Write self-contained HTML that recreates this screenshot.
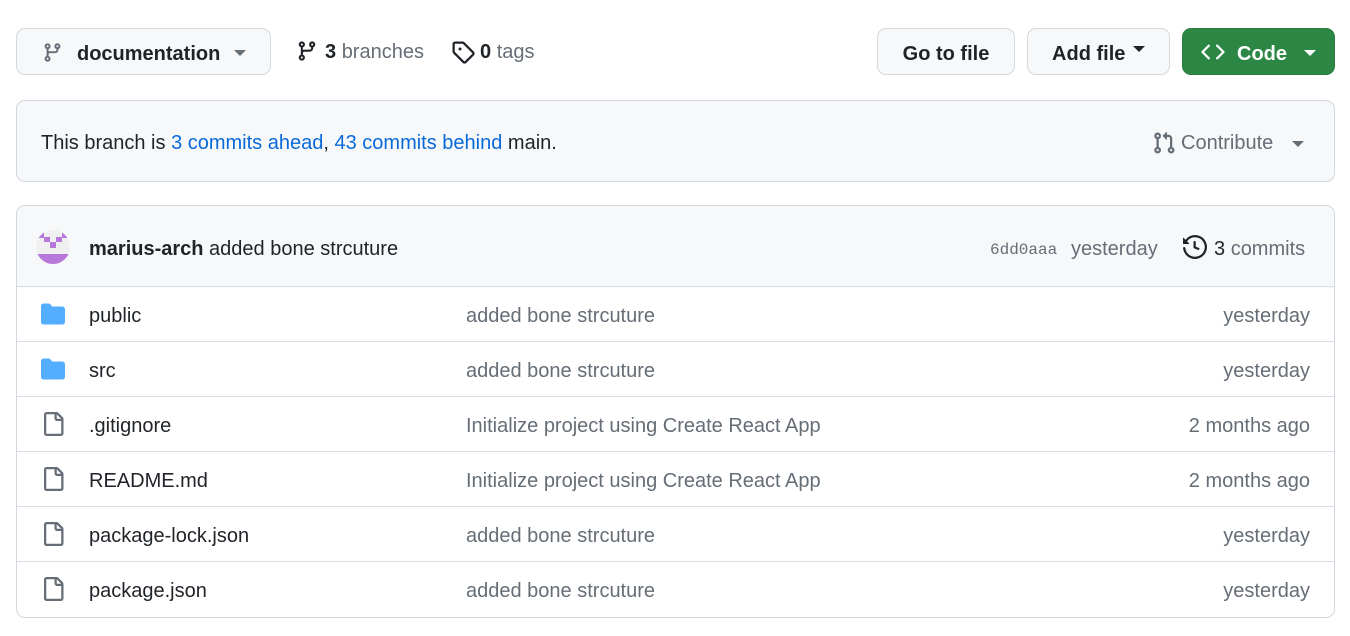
<!DOCTYPE html>
<html><head><meta charset="utf-8"><style>
*{box-sizing:border-box;margin:0;padding:0}
body{width:1350px;height:636px;background:#fff;font-family:"Liberation Sans",sans-serif;color:#1f2328;font-size:20px;position:relative;overflow:hidden}
.abs{position:absolute}
.btn{position:absolute;border:1px solid #d5d8dc;background:#f6f8fa;border-radius:9px;display:flex;align-items:center;font-weight:bold;font-size:20px}
.caret{display:inline-block;width:0;height:0;border-left:6px solid transparent;border-right:6px solid transparent;border-top:6px solid currentColor}
.muted{color:#656d76}
a{color:#0969da;text-decoration:none}
.row{position:absolute;left:17px;width:1317px;height:55px;border-top:1px solid #d8dee4}
.row .ic{position:absolute;left:24px;top:15px}
.row .nm{position:absolute;left:72px;top:18px}
.row .msg{position:absolute;left:449px;top:18px;color:#656d76}
.row .dt{position:absolute;right:24px;top:18px;color:#656d76}
</style></head><body>
<div class="btn" style="left:16px;top:28px;width:255px;height:47px">
<svg class="abs" style="left:25px;top:13px" width="21" height="21" viewBox="0 0 16 16" fill="#656d76"><path d="M9.5 3.25a2.25 2.25 0 1 1 3 2.122V6A2.5 2.5 0 0 1 10 8.5H6a1 1 0 0 0-1 1v1.128a2.251 2.251 0 1 1-1.5 0V5.372a2.25 2.25 0 1 1 1.5 0v1.836A2.493 2.493 0 0 1 6 7h4a1 1 0 0 0 1-1v-.628A2.25 2.250 0 0 1 9.5 3.25Zm-6 0a.75.75 0 1 0 1.5 0 .75.75 0 0 0-1.5 0Zm8.25-.75a.75.75 0 1 0 0 1.5.75.75 0 0 0 0-1.5ZM4.25 12a.75.75 0 1 0 0 1.5.75.75 0 0 0 0-1.5Z"/></svg>
<span class="abs" style="left:60px;top:14px">documentation</span>
<span class="caret abs" style="left:217px;top:21px;color:#656d76"></span>
</div>
<svg class="abs" style="left:296px;top:40px" width="22" height="22" viewBox="0 0 16 16" fill="#1f2328"><path d="M9.5 3.25a2.25 2.25 0 1 1 3 2.122V6A2.5 2.5 0 0 1 10 8.5H6a1 1 0 0 0-1 1v1.128a2.251 2.251 0 1 1-1.5 0V5.372a2.25 2.25 0 1 1 1.5 0v1.836A2.493 2.493 0 0 1 6 7h4a1 1 0 0 0 1-1v-.628A2.25 2.25 0 0 1 9.5 3.25Zm-6 0a.75.75 0 1 0 1.5 0 .75.75 0 0 0-1.5 0Zm8.25-.75a.75.75 0 1 0 0 1.5.75.75 0 0 0 0-1.5ZM4.25 12a.75.75 0 1 0 0 1.5.75.75 0 0 0 0-1.5Z"/></svg>
<div class="abs" style="left:325px;top:41px"><b>3</b> <span class="muted">branches</span></div>
<svg class="abs" style="left:451px;top:40px" width="24" height="24" viewBox="0 0 16 16" fill="#1f2328"><path d="M1 7.775V2.75C1 1.784 1.784 1 2.75 1h5.025c.464 0 .91.184 1.238.513l6.25 6.250a1.75 1.75 0 0 1 0 2.474l-5.026 5.026a1.75 1.75 0 0 1-2.474 0l-6.25-6.25A1.752 1.752 0 0 1 1 7.775Zm1.5 0c0 .066.026.13.073.177l6.25 6.25a.25.25 0 0 0 .354 0l5.025-5.025a.25.25 0 0 0 0-.354l-6.25-6.25a.25.25 0 0 0-.177-.073H2.75a.25.25 0 0 0-.25.25ZM6 5a1 1 0 1 1 0 2 1 1 0 0 1 0-2Z"/></svg>
<div class="abs" style="left:480px;top:41px"><b>0</b> <span class="muted">tags</span></div>

<div class="btn" style="left:877px;top:28px;width:138px;height:47px;justify-content:center;padding-top:5px">Go to file</div>
<div class="btn" style="left:1027px;top:28px;width:143px;height:47px;justify-content:center;padding-top:5px">Add file&nbsp;<span class="caret" style="margin-left:2px;margin-top:-10px"></span></div>
<div class="btn" style="left:1182px;top:28px;width:153px;height:47px;background:#2c8745;border-color:#2a7f40;color:#fff">
<svg class="abs" style="left:18px;top:11px" width="24" height="24" viewBox="0 0 16 16" fill="#fff"><path d="m11.28 3.22 4.25 4.25a.75.75 0 0 1 0 1.06l-4.25 4.25a.749.749 0 0 1-1.275-.326.749.749 0 0 1 .215-.734L13.94 8l-3.72-3.72a.749.749 0 0 1 .326-1.275.749.749 0 0 1 .734.215Zm-6.56 0a.751.751 0 0 1 1.042.018.751.751 0 0 1 .018 1.042L2.06 8l3.72 3.72a.749.749 0 0 1-.326 1.275.749.749 0 0 1-.734-.215L.47 8.53a.75.75 0 0 1 0-1.06Z"/></svg>
<span class="abs" style="left:54px;top:14px">Code</span>
<span class="caret abs" style="left:121px;top:21px"></span>
</div>

<div class="abs" style="left:16px;top:100px;width:1319px;height:82px;background:#f6f8fa;border:1px solid #d0d7de;border-radius:9px">
<div class="abs" style="left:24px;top:31px">This branch is <a>3 commits ahead</a>, <a>43 commits behind</a> main.</div>
<svg class="abs" style="left:1135px;top:30px" width="24" height="24" viewBox="0 0 16 16" fill="#656d76"><path d="M1.5 3.25a2.25 2.25 0 1 1 3 2.122v5.256a2.251 2.251 0 1 1-1.5 0V5.372A2.25 2.25 0 0 1 1.5 3.25Zm5.677-.177L9.573.677A.25.25 0 0 1 10 .854V2.5h1A2.5 2.5 0 0 1 13.5 5v5.628a2.251 2.251 0 1 1-1.5 0V5a1 1 0 0 0-1-1h-1v1.646a.25.25 0 0 1-.427.177L7.177 3.427a.25.25 0 0 1 0-.354ZM3.75 2.5a.75.75 0 1 0 0 1.5.75.75 0 0 0 0-1.5Zm0 9.5a.75.75 0 1 0 0 1.5.75.75 0 0 0 0-1.5Zm8.25.75a.75.75 0 1 0 1.5 0 .75.75 0 0 0-1.5 0Z"/></svg>
<div class="abs muted" style="left:1164px;top:31px">Contribute</div>
<span class="caret abs" style="left:1275px;top:40px;color:#656d76"></span>
</div>

<div class="abs" style="left:16px;top:205px;width:1319px;height:413px;border:1px solid #d0d7de;border-radius:9px;overflow:hidden">
<div class="abs" style="left:0;top:0;width:1319px;height:82px;background:#f6f8fa"></div>
<svg class="abs" style="left:19px;top:23px" width="35" height="36" viewBox="0 0 35 36"><defs><clipPath id="c"><circle cx="17" cy="18" r="17"/></clipPath></defs><g clip-path="url(#c)"><rect width="35" height="36" fill="#f0f0f0"/><g fill="#b877db"><rect x="2" y="1" width="6" height="8"/><rect x="8" y="8" width="6" height="5"/><rect x="14" y="13" width="6" height="6"/><rect x="20" y="8" width="6" height="5"/><rect x="26" y="1" width="6" height="8"/><rect x="0" y="25" width="35" height="11"/></g></g></svg>
<div class="abs" style="left:72px;top:32px"><b>marius-arch</b> added bone strcuture</div>
<div class="abs muted" style="left:973px;top:35px;font-family:'Liberation Mono',monospace;font-size:16px">6dd0aaa</div>
<div class="abs muted" style="left:1054px;top:32px">yesterday</div>
<svg class="abs" style="left:1166px;top:29px" width="24" height="24" viewBox="0 0 16 16" fill="#1f2328"><path d="m.427 1.927 1.215 1.215a8.002 8.002 0 1 1-1.6 5.685.75.75 0 1 1 1.493-.154 6.5 6.5 0 1 0 1.18-4.458l1.358 1.358A.25.25 0 0 1 3.896 6H.25A.25.25 0 0 1 0 5.75V2.104a.25.25 0 0 1 .427-.177ZM7.750 4a.75.75 0 0 1 .75.75v2.992l2.028.812a.75.75 0 0 1-.557 1.392l-2.5-1A.751.751 0 0 1 7 8.25v-3.5A.75.75 0 0 1 7.75 4Z"/></svg>
<div class="abs" style="left:1197px;top:32px">3 <span class="muted">commits</span></div>
</div>

<div class="row" style="top:286px"><svg class="ic" width="24" height="24" viewBox="0 0 16 16" fill="#54aeff"><path d="M1.75 1A1.75 1.75 0 0 0 0 2.75v10.5C0 14.216.784 15 1.75 15h12.5A1.75 1.75 0 0 0 16 13.25v-8.5A1.75 1.75 0 0 0 14.25 3H7.5a.25.25 0 0 1-.2-.1l-.9-1.2C6.07 1.26 5.55 1 5 1H1.75Z"/></svg><span class="nm">public</span><span class="msg">added bone strcuture</span><span class="dt">yesterday</span></div>
<div class="row" style="top:341px"><svg class="ic" width="24" height="24" viewBox="0 0 16 16" fill="#54aeff"><path d="M1.75 1A1.75 1.75 0 0 0 0 2.75v10.5C0 14.216.784 15 1.75 15h12.5A1.75 1.75 0 0 0 16 13.25v-8.5A1.75 1.75 0 0 0 14.25 3H7.5a.25.25 0 0 1-.2-.1l-.9-1.2C6.07 1.26 5.55 1 5 1H1.75Z"/></svg><span class="nm">src</span><span class="msg">added bone strcuture</span><span class="dt">yesterday</span></div>
<div class="row" style="top:396px"><svg class="ic" width="24" height="24" viewBox="0 0 16 16" fill="#656d76"><path d="M2 1.75C2 .784 2.784 0 3.75 0h6.586c.464 0 .909.184 1.237.513l2.914 2.914c.329.328.513.773.513 1.237v9.586A1.75 1.75 0 0 1 13.25 16h-9.5A1.75 1.75 0 0 1 2 14.25Zm1.75-.25a.25.25 0 0 0-.25.25v12.5c0 .138.112.25.25.25h9.5a.25.25 0 0 0 .25-.25V6h-2.75A1.75 1.75 0 0 1 9 4.25V1.5Zm6.75.062V4.25c0 .138.112.25.25.25h2.688l-.011-.013-2.914-2.914-.013-.011Z"/></svg><span class="nm">.gitignore</span><span class="msg">Initialize project using Create React App</span><span class="dt">2 months ago</span></div>
<div class="row" style="top:451px"><svg class="ic" width="24" height="24" viewBox="0 0 16 16" fill="#656d76"><path d="M2 1.75C2 .784 2.784 0 3.75 0h6.586c.464 0 .909.184 1.237.513l2.914 2.914c.329.328.513.773.513 1.237v9.586A1.75 1.75 0 0 1 13.25 16h-9.5A1.75 1.75 0 0 1 2 14.25Zm1.75-.25a.25.25 0 0 0-.25.25v12.5c0 .138.112.25.25.25h9.5a.25.25 0 0 0 .25-.25V6h-2.75A1.75 1.75 0 0 1 9 4.25V1.5Zm6.75.062V4.25c0 .138.112.25.25.25h2.688l-.011-.013-2.914-2.914-.013-.011Z"/></svg><span class="nm">README.md</span><span class="msg">Initialize project using Create React App</span><span class="dt">2 months ago</span></div>
<div class="row" style="top:506px"><svg class="ic" width="24" height="24" viewBox="0 0 16 16" fill="#656d76"><path d="M2 1.75C2 .784 2.784 0 3.75 0h6.586c.464 0 .909.184 1.237.513l2.914 2.914c.329.328.513.773.513 1.237v9.586A1.75 1.75 0 0 1 13.25 16h-9.5A1.75 1.75 0 0 1 2 14.25Zm1.75-.25a.25.25 0 0 0-.25.25v12.5c0 .138.112.25.25.25h9.5a.25.25 0 0 0 .25-.25V6h-2.75A1.75 1.75 0 0 1 9 4.25V1.5Zm6.75.062V4.25c0 .138.112.25.25.25h2.688l-.011-.013-2.914-2.914-.013-.011Z"/></svg><span class="nm">package-lock.json</span><span class="msg">added bone strcuture</span><span class="dt">yesterday</span></div>
<div class="row" style="top:561px"><svg class="ic" width="24" height="24" viewBox="0 0 16 16" fill="#656d76"><path d="M2 1.75C2 .784 2.784 0 3.75 0h6.586c.464 0 .909.184 1.237.513l2.914 2.914c.329.328.513.773.513 1.237v9.586A1.75 1.75 0 0 1 13.25 16h-9.5A1.75 1.75 0 0 1 2 14.25Zm1.75-.25a.25.25 0 0 0-.25.25v12.5c0 .138.112.25.25.25h9.5a.25.25 0 0 0 .25-.25V6h-2.75A1.75 1.75 0 0 1 9 4.25V1.5Zm6.75.062V4.25c0 .138.112.25.25.25h2.688l-.011-.013-2.914-2.914-.013-.011Z"/></svg><span class="nm">package.json</span><span class="msg">added bone strcuture</span><span class="dt">yesterday</span></div>
</body></html>
